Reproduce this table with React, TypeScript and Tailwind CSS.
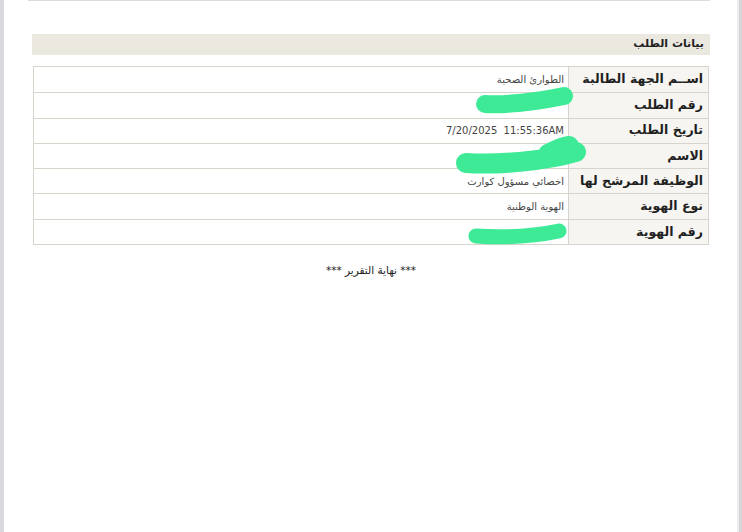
import React from 'react'

const font = { fontFamily: '"DejaVu Sans", "Liberation Sans", sans-serif' }

const rows: { label: string; value: string; ltr?: boolean }[] = [
  { label: 'اســم الجهة الطالبة', value: 'الطوارئ الصحية' },
  { label: 'رقم الطلب', value: '' },
  { label: 'تاريخ الطلب', value: '7/20/2025  11:55:36AM', ltr: true },
  { label: 'الاسم', value: '' },
  { label: 'الوظيفة المرشح لها', value: 'اخصائي مسؤول كوارث' },
  { label: 'نوع الهوية', value: 'الهوية الوطنية' },
  { label: 'رقم الهوية', value: '' },
]

function Scribbles() {
  // redaction marks drawn over the table
  return (
    <svg className="pointer-events-none absolute left-0 top-0" width="742" height="532">
      <g fill="none" stroke="#3fea97" strokeLinecap="round" strokeLinejoin="round">
        <path d="M485 104 C 510 105, 540 101, 564 96" strokeWidth="18" />
        <path d="M466 163 C 500 165, 545 161, 576 152 M548 154 C 556 150, 562 147, 569 146" strokeWidth="20" />
        <path d="M476 236 C 505 238, 535 236, 559 231" strokeWidth="15" />
      </g>
    </svg>
  )
}

export default function App() {
  return (
    <div className="relative flex h-[532px] w-[742px] bg-white" style={font}>
      <div className="w-[4px] bg-[#d8d8dd]" />
      <div className="flex-1">
        <div className="ml-[24px] mr-[27px] h-[1px] bg-[#dcdcdc]" />
        <div className="ml-[28px] mr-[27px]">
          <div dir="rtl" className="mt-[33px] flex h-[21px] items-center bg-[#ebe8e0] pr-[6px]">
            <span className="text-[11px] font-bold text-[#1e1e1e]">بيانات الطلب</span>
          </div>
          <div dir="rtl" className="mx-[1px] mt-[11px] border border-[#d7d4cc]">
            {rows.map((r, i) => (
              <div
                key={i}
                className={`flex h-[25.3px] ${i > 0 ? 'border-t border-[#d7d4cc]' : ''}`}
              >
                <div className="flex w-[140px] shrink-0 items-center border-l border-[#d7d4cc] bg-[#f6f5f1] pr-[5px] text-[12.5px] font-bold text-[#1f1f1f]">
                  {r.label}
                </div>
                <div className="flex flex-1 items-center pr-[4px] text-[10px] text-[#444]">
                  {r.ltr ? <span dir="ltr" className="whitespace-pre">{r.value}</span> : r.value}
                </div>
              </div>
            ))}
          </div>
          <div dir="rtl" className="mt-[18px] text-center text-[10.5px] text-[#222]">
            *** نهاية التقرير ***
          </div>
        </div>
      </div>
      <div className="flex w-[5px]">
        <div className="w-[2px] bg-[#ececef]" />
        <div className="w-[3px] bg-[#d5d5da]" />
      </div>
      <Scribbles />
    </div>
  )
}
